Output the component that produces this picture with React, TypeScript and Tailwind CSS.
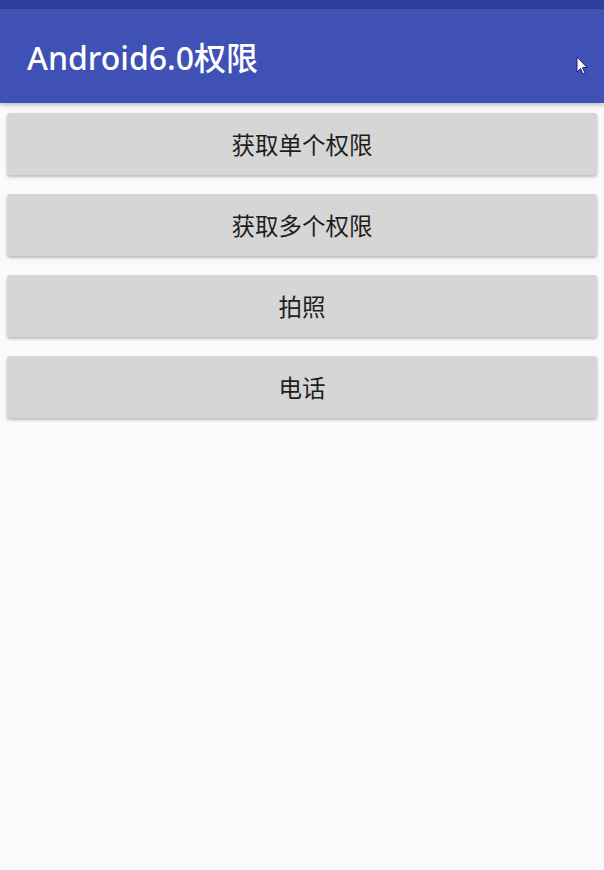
import React from 'react';

const buttons = ['获取单个权限', '获取多个权限', '拍照', '电话'];

const App: React.FC = () => {
  return (
    <div className="w-[604px] h-[870px] bg-[#fafafa] flex flex-col overflow-hidden" style={{ fontFamily: '"Noto Sans", "Noto Sans CJK SC", sans-serif' }}>
      <div className="h-[9px] bg-[#2f3e9c]" />
      <div className="relative h-[94px] bg-[#3f51b5] flex items-center pl-[27px] shadow-[0_2px_4px_rgba(0,0,0,0.25)] z-10">
        <h1 className="text-white text-[32px] font-medium leading-none mt-[3px]">Android6.0权限</h1>
        <svg className="absolute left-[576px] top-[47px]" width="12" height="20" viewBox="0 0 12 20">
          <path d="M1 1 L1 16 L4.5 12.5 L7 18 L9 17 L6.5 11.5 L11 11.5 Z" fill="white" stroke="#1a237e" strokeWidth="1" />
        </svg>
      </div>
      <div className="flex flex-col gap-[19px] px-[7px] pt-[10px]">
        {buttons.map((label) => (
          <button
            key={label}
            className="h-[62px] w-full bg-[#d6d6d6] rounded-[3px] shadow-[0_2px_3px_rgba(0,0,0,0.25)] text-[#1e1e1e] text-[23.5px] flex items-center justify-center pt-[3px]"
          >
            {label}
          </button>
        ))}
      </div>
    </div>
  );
};

export default App;
